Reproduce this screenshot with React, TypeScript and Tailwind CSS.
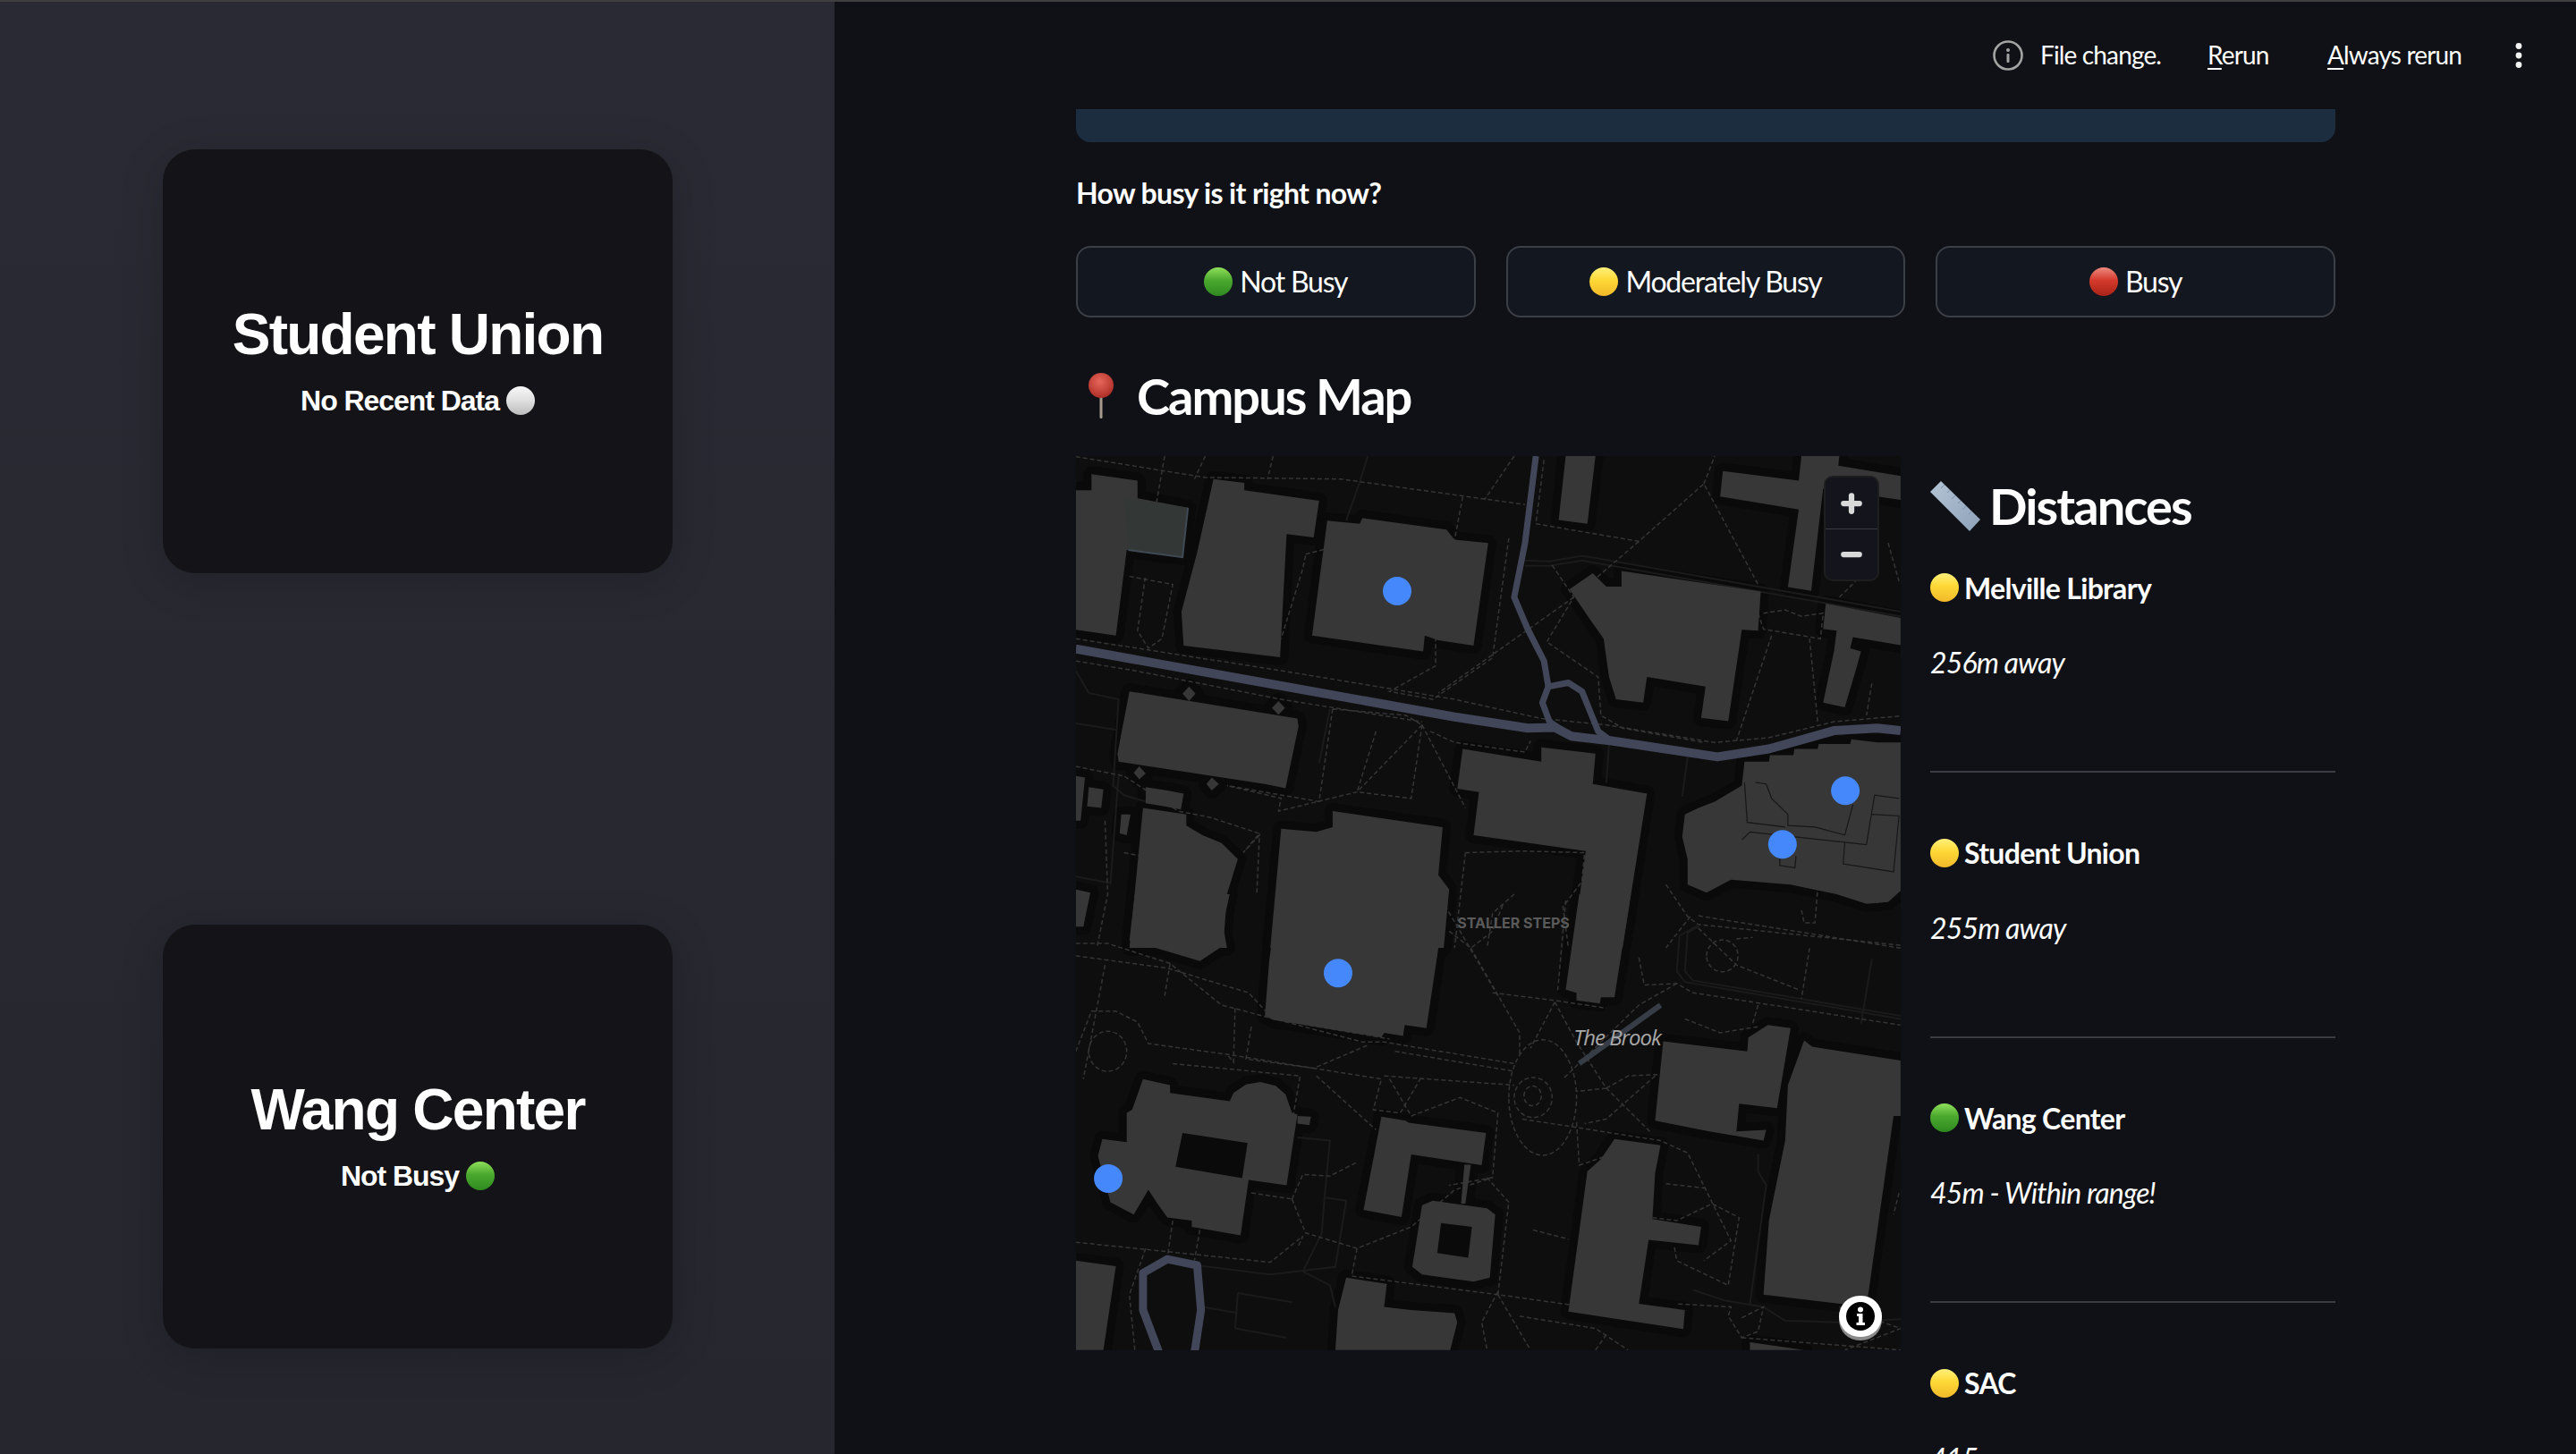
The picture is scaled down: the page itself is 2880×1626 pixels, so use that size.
import React from "react";
import { Plus, Minus } from "lucide-react";

const SANS = "font-['Lato','Noto_Sans',sans-serif]";

type DotKind = "green" | "yellow" | "red" | "white";
const DOTS: Record<DotKind, [string, string, string]> = {
  green: ["#8fe05a", "#4ba82e", "#2f8a1f"],
  yellow: ["#fff07a", "#fdd835", "#f2b92b"],
  red: ["#f08a80", "#d43a2c", "#a92318"],
  white: ["#f7f7f7", "#e2e2e2", "#bdbdbd"],
};

function Dot({ kind, className = "" }: { kind: DotKind; className?: string }) {
  const [a, b, c] = DOTS[kind];
  const id = `dot-${kind}`;
  return (
    <svg viewBox="0 0 32 32" className={`w-8 h-8 shrink-0 ${className}`}>
      <defs>
        <linearGradient id={id} x1="0" y1="0" x2="0" y2="1">
          <stop offset="0" stopColor={a} />
          <stop offset="0.45" stopColor={b} />
          <stop offset="1" stopColor={c} />
        </linearGradient>
      </defs>
      <circle cx="16" cy="16" r="16" fill={`url(#${id})`} />
    </svg>
  );
}

function Card({ title, status, kind }: { title: string; status: string; kind: DotKind }) {
  return (
    <div className="w-[570px] h-[474px] rounded-[36px] bg-[#131318] shadow-[0_8px_50px_rgba(0,0,0,0.16)] flex flex-col items-center justify-center gap-6 text-white font-['Liberation_Sans',sans-serif] font-bold">
      <div className="text-[64px] leading-[64px] tracking-[-1.75px]">{title}</div>
      <div className="text-[32px] leading-9 flex items-center gap-2">
        <span className="tracking-[-1.05px]">{status}</span>
        <Dot kind={kind} />
      </div>
    </div>
  );
}

function StatusButton({ label, kind }: { label: string; kind: DotKind }) {
  return (
    <div className="flex-1 h-20 rounded-2xl border-2 border-[#3d3f47] bg-[#131720] flex items-center justify-center gap-2 text-[32px] text-white">
      <Dot kind={kind} />
      <span className="tracking-[-1.2px]">{label}</span>
    </div>
  );
}

function Pin() {
  return (
    <svg viewBox="0 0 28 52" className="w-7 h-[52px] shrink-0">
      <defs>
        <radialGradient id="pin-head" cx="0.45" cy="0.35" r="0.7">
          <stop offset="0" stopColor="#e8675c" />
          <stop offset="1" stopColor="#a92a22" />
        </radialGradient>
      </defs>
      <rect x="12.5" y="22" width="3" height="29" rx="1.2" fill="#a59a8c" />
      <circle cx="14" cy="14" r="14" fill="url(#pin-head)" />
    </svg>
  );
}

function Ruler() {
  return (
    <svg viewBox="0 0 56 56" className="w-14 h-14 shrink-0">
      <defs>
        <linearGradient id="ruler-g" x1="0" y1="0" x2="1" y2="1">
          <stop offset="0" stopColor="#b4c4d6" />
          <stop offset="1" stopColor="#8fa2b8" />
        </linearGradient>
      </defs>
      <polygon points="12,0 56,43 44,56 0,12" fill="url(#ruler-g)" />
      <path d="M16,4 L12,8 M22,10 L19,13 M28,16 L24,20 M34,22 L31,25 M40,28 L36,32 M46,34 L43,37" stroke="#7d90a6" strokeWidth="1" />
    </svg>
  );
}

const Z4_BUILDINGS = [
  "21,135 50,135 50,85 135,105 135,160 228,190 218,345 115,322 95,590 21,572",
  "275,100 332,112 332,135 470,168 460,283 410,272 398,658 220,622 216,515 245,330",
  "485,230 545,240 550,222 705,258 720,290 782,300 755,622 690,605 665,590 662,640 457,590",
  "975,395 1000,437 1028,437 1028,388 1285,452 1280,575 1250,572 1225,858 1175,848 1183,750 1075,720 1068,800 1018,790 1005,720 995,600 970,540 932,445",
  "925,28 980,28 965,240 912,228",
  "1215,75 1355,105 1360,28 1430,28 1428,58 1543,90 1543,165 1400,130 1378,450 1335,438 1355,195 1210,155",
  "1405,490 1543,535 1543,620 1455,595 1450,630 1470,640 1460,700 1440,815 1400,800 1420,640 1425,575 1400,570",
  "120,765 430,850 432,875 408,1068 370,1055 100,985 98,960",
  "230,750 242,772 230,795 218,772",
  "395,795 407,817 395,838 383,817",
  "138,1000 150,1022 138,1040 128,1020",
  "272,1035 285,1055 272,1075 262,1055",
  "145,1130 225,1150 225,1185 255,1215 290,1240 320,1290 300,1400 295,1520 300,1568 120,1568",
  "400,1195 465,1205 495,1190 495,1140 698,1190 690,1340 710,1385 700,1568 380,1568",
  "735,945 880,985 880,940 980,960 975,1055 1075,1085 1030,1568 938,1568 962,1265 858,1240 755,1215 765,1080 725,1070",
  "1255,985 1300,985 1302,965 1345,965 1347,945 1390,945 1392,930 1450,930 1452,915 1500,925 1543,925 1543,1390 1520,1425 1480,1430 1425,1400 1340,1370 1230,1355 1185,1395 1150,1370 1150,1290 1140,1220 1145,1150 1170,1130 1200,1110 1250,1060",
  "45,1065 72,1072 68,1130 42,1125",
  "105,1150 122,1150 115,1215 102,1210",
  "150,1065 190,1075 220,1085 215,1135 185,1125 150,1115",
  "21,1030 38,1035 30,1170 21,1170",
  "21,1385 48,1395 35,1500 21,1500",
];

const Z5_BUILDINGS = [
  "130,0 305,0 290,120 295,165 250,217 150,165 120,150",
  "395,0 705,0 668,435 628,425 625,460 590,450 585,465 385,408 370,395 378,215",
  "950,0 1045,0 1015,335 990,335 988,355 945,345 945,320 925,310",
  "145,600 195,620 195,645 305,672 312,645 335,618 362,610 390,622 408,650 420,710 430,715 410,945 340,928 325,1108 235,1080 235,1060 190,1050 170,1000 155,960 128,1040 85,1000 62,850 70,795 115,805 115,710 125,700",
  "430,720 455,722 452,750 430,745",
  "585,722 630,735 635,742 778,775 770,880 640,845 622,1048 552,1025",
  "680,995 780,1020 795,1040 785,1245 755,1258 660,1235 642,1210 660,1010",
  "738,878 750,878 740,1005 732,1005",
  "520,1245 595,1265 590,1340 640,1350 720,1360 725,1390 712,1480 500,1480 505,1350",
  "1015,795 1100,815 1090,905 1085,1055 1175,1080 1170,1140 1078,1122 1060,1330 1145,1350 1142,1412 930,1355 965,900 990,860",
  "1105,478 1260,510 1262,465 1298,425 1340,435 1315,695 1245,680 1240,770 1295,765 1290,800 1190,770 1090,735",
  "1365,475 1380,495 1543,540 1543,720 1530,720 1480,1340 1290,1300 1300,1060 1330,800 1335,620",
  "21,1190 95,1208 72,1480 21,1480",
  "1265,1455 1365,1480 1265,1480",
  "21,0 45,0 35,105 21,105",
  "1470,0 1535,0 1500,30",
];

const Z5_HOLES = [
  "218,775 338,808 328,922 205,885",
  "695,1068 752,1080 745,1180 688,1165",
];

const Z4_DASHED = [
  "M21,600 L400,700 L720,790 L880,850 L1000,870 L1200,925 L1300,910 L1420,860 L1543,842",
  "M21,670 L130,700 L400,790 L660,860",
  "M21,30 L260,95 L510,100 L850,180",
  "M185,28 L160,270 M260,28 L240,100",
  "M385,28 L375,100",
  "M735,155 L720,290 M830,28 L775,165",
  "M820,285 L790,660 L680,790 L600,765 L685,685 L685,600",
  "M885,40 L870,240 L1060,295 L1180,115 L1280,430",
  "M1180,115 L1200,28 M1060,295 L940,470 L690,770",
  "M900,370 L940,470 L890,610 L985,720 L990,840 L1030,880 L1180,925",
  "M120,405 L200,430 L180,600 L155,630 L135,575 L150,400",
  "M445,340 L440,380 L400,600 M445,335 L480,320",
  "M660,870 L540,1080 L395,1140 L400,1100 L300,1060",
  "M660,870 L740,1130 M660,870 L640,1100 L540,1080 M575,890 L540,1080",
  "M675,890 L720,925 L850,955 L860,920",
  "M495,820 L630,840 L660,870 M495,820 L470,1110 L300,1060",
  "M740,1270 L845,1265 L960,1270 L955,1360 L920,1440 L930,1568",
  "M740,1270 L720,1568 M830,1400 L790,1460 L780,1568",
  "M1280,520 L1290,570 L1395,600 L1400,520 L1360,530 L1330,510 L1290,520",
  "M1305,590 L1240,920 M1375,600 L1390,860 M1490,740 L1480,840 M1430,470 L1460,420 M1520,300 L1540,420",
  "M1110,1370 L1150,1470 L1170,1495 L1543,1560",
  "M1360,1450 L1365,1490 L1385,1490 L1390,1380 M1155,1470 L1110,1568",
  "M110,1270 L140,1280 M21,1000 L110,1030 L210,1140 L270,1160 L360,1210 L330,1270 L360,1215 L355,1400",
  "M75,1170 L80,1400 L60,1568",
];

const Z5_DASHED = [
  "M21,160 L80,160 L195,225 L290,360 L550,480 L590,480 L830,550",
  "M21,200 L190,240 L340,320 L385,405 L600,470",
  "M21,510 L50,380 L95,380 L135,415 L155,485 L300,520 L460,565 L560,490",
  "M45,510 A35,65 0 1 1 115,510 A35,65 0 1 1 45,510",
  "M75,230 L35,600 M195,225 L185,330 M315,370 L312,545 L300,520",
  "M345,430 L335,535 L460,565 L585,600 L570,700 L620,710 L660,590",
  "M200,550 L435,590 L420,740 M465,590 L575,765 M590,590 L830,620",
  "M610,510 L830,575 M600,600 L640,720 L730,660 L800,710 L790,920 L710,945",
  "M830,660 A35,65 0 1 1 900,660 A35,65 0 1 1 830,660",
  "M848,655 A15,30 0 1 1 880,655 A15,30 0 1 1 848,655",
  "M820,660 A50,150 0 1 1 945,660 A50,150 0 1 1 820,660",
  "M945,740 L950,880 L1000,850 M845,730 L1100,800 L1150,840 L1230,1125 L1180,1190",
  "M750,175 L840,450 L840,520 M905,350 L860,500 M905,350 L945,480 L1000,630 L1080,770",
  "M1000,630 L1040,590 L1100,585 M1000,630 L945,640 M1090,590 L1000,730 L960,745",
  "M710,120 L750,175 L790,120 L810,30 M790,320 L905,345 L1000,370",
  "M1060,205 L1070,295 L1130,290 L1160,320 L1543,425",
  "M1130,290 L1060,360 L920,600 M1185,200 A28,50 0 1 1 1243,200 A28,50 0 1 1 1185,200",
  "M1170,110 L1240,230 L1355,310 M1240,145 L1270,140 M1170,70 L1543,175 M1145,405 L1210,450 L1280,430",
  "M1375,175 L1360,340 M1280,360 L1270,420 M800,330 L700,30 M925,20 L910,320",
  "M420,990 L440,910 L490,915 L540,870 M420,990 L445,1100 L540,1150 L640,1080 L720,960 L790,920",
  "M800,1300 L820,1000 L780,920 M540,1150 L530,1240 L800,1300 L1000,1350",
  "M800,1290 L770,1390 L780,1480 M800,1300 L860,1480 M840,1370 L980,1410 L1040,1480",
  "M345,970 L420,990 M865,1090 L930,1120 M21,1130 L380,1195 L440,1110 L430,1150",
  "M200,1060 L190,1180 M150,1150 L120,1300 L130,1480 M250,1090 L240,1190",
  "M1110,940 L1185,955 M1085,1050 L1130,1060 L1195,1005 L1245,1050 L1225,1270 L1130,1190 L1125,1140",
  "M1250,1375 L1290,1340 L1280,1420 L1250,1440 L1225,1370 L1230,1340 L1130,1330 M1250,1440 L1543,1480",
  "M1540,970 L1530,1040 M1430,1340 L1543,1410 L1440,1480 M1000,1430 L980,1480",
];

const Z4_DARK = [
  "M850,355 L895,358 L955,340 L1543,515",
  "M850,372 L895,372 L955,355 L1543,530",
  "M21,700 L45,770 L100,790 L90,1060 L110,1090 L150,1110",
  "M560,28 L545,110 L520,230",
  "M21,865 L95,885",
  "M490,820 L470,990",
  "M1005,930 L1000,1050",
  "M1150,970 L1140,1095",
  "M21,1345 L85,1365 L100,1030",
];

const Z5_DARK = [
  "M1170,100 L1135,135 L1130,250 L1145,285 L1543,405",
  "M1170,105 L1150,125 L1145,250 L1160,280 L1543,395",
  "M1280,845 L1280,900 L1295,945 L1265,1330",
  "M1490,210 L1470,420",
  "M245,1205 L380,1235 L500,1210 L520,995 L480,985 L490,800 L430,790",
  "M440,1225 L490,1270 L500,1340",
  "M320,1295 L420,1325 M315,1410 L410,1440 M320,1295 L315,1410",
  "M1160,1285 L1220,1320 L1290,1340 L1330,1385 L1430,1390 L1543,1380",
  "M440,1225 L475,1100 L480,985",
  "M255,1340 L320,1360",
];

function z4(x: number, y: number) {
  return [x * 0.6059 - 13, y * 0.3571 - 10];
}
function z5(x: number, y: number) {
  return [x * 0.6059 - 13, 490 + y * 0.3444];
}

const DOTS_MAP = [z4(614, 451), z4(1441, 1076), z4(1325, 1244), z5(505, 256), z5(81, 923)];

function Shadows({ buildings, transform }: { buildings: string[]; transform: string }) {
  return (
    <g transform={transform}>
      {buildings.map((p, i) => (
        <polygon key={i} points={p} fill="#0a0a0a" stroke="#0a0a0a" strokeWidth="18" strokeLinejoin="round" vectorEffect="non-scaling-stroke" />
      ))}
    </g>
  );
}

function Lines({ dashed, dark, transform }: { dashed: string[]; dark: string[]; transform: string }) {
  return (
    <g transform={transform}>
      {dark.map((d, i) => (
        <path key={i} d={d} fill="none" stroke="#1b1b1b" strokeWidth="2" vectorEffect="non-scaling-stroke" />
      ))}
      {dashed.map((d, i) => (
        <path key={i} d={d} fill="none" stroke="#353535" strokeWidth="1.5" strokeDasharray="5 3" vectorEffect="non-scaling-stroke" />
      ))}
    </g>
  );
}

function Buildings({ buildings, holes = [], transform }: { buildings: string[]; holes?: string[]; transform: string }) {
  return (
    <g transform={transform}>
      {buildings.map((p, i) => (
        <polygon key={i} points={p} fill="#373737" />
      ))}
      {holes.map((p, i) => (
        <polygon key={i} points={p} fill="#0a0a0a" />
      ))}
    </g>
  );
}

function CampusMap() {
  const T4 = "translate(-13 -10) scale(0.6059 0.3571)";
  const T5 = "translate(-13 490) scale(0.6059 0.3444)";
  return (
    <div className="relative w-[922px] h-[1000px] shrink-0 overflow-hidden bg-[#0e0e0e]">
      <svg viewBox="0 0 922 1000" className="block w-full h-full">
        <Shadows buildings={Z4_BUILDINGS} transform={T4} />
        <Shadows buildings={Z5_BUILDINGS} transform={T5} />
        <Lines dashed={Z4_DASHED} dark={Z4_DARK} transform={T4} />
        <Lines dashed={Z5_DASHED} dark={Z5_DARK} transform={T5} />
        <Buildings buildings={Z4_BUILDINGS} transform={T4} />
        <Buildings buildings={Z5_BUILDINGS} holes={Z5_HOLES} transform={T5} />
        <g transform={T4}>
          <polygon points="110,160 228,190 218,345 118,322" fill="#333836" />
          <path d="M228,190 L218,345 L118,322" fill="none" stroke="#3f4a55" strokeWidth="2" vectorEffect="non-scaling-stroke" />
          <path d="M1275,1050 L1295,1055 L1305,1100 L1335,1150 L1335,1185 L1385,1190 L1440,1215 L1455,1120 M1255,1050 L1260,1175 L1330,1190 M1250,1230 L1265,1205 L1480,1245 L1495,1090 L1540,1100 M1440,1240 L1437,1305 L1530,1330 L1540,1155 L1490,1150 M1320,1280 L1320,1310 L1348,1318 L1350,1280" fill="none" stroke="#171717" strokeWidth="1.2" vectorEffect="non-scaling-stroke" />
          <path vectorEffect="non-scaling-stroke" d="M21,632 L720,845 L855,880 L905,878 L935,905 L1010,920 L1205,970 L1300,945 L1420,888 L1500,880 L1543,888" fill="none" stroke="#414759" strokeWidth="10" strokeLinejoin="round" />
          <g fill="none" stroke="#414759" strokeWidth="7" strokeLinejoin="round">
            <path vectorEffect="non-scaling-stroke" d="M870,28 L850,300 L830,470 L855,570 L885,670 L893,750 L930,738 L955,765 L985,890 L1005,915" />
            <path vectorEffect="non-scaling-stroke" d="M893,750 L882,800 L895,860 L935,905" />
          </g>
        </g>
        <g transform={T5}>
          <path vectorEffect="non-scaling-stroke" d="M175,1490 L145,1350 L145,1230 L190,1185 L245,1205 L252,1350 L240,1490" fill="none" stroke="#414759" strokeWidth="9" strokeLinejoin="round" />
          <path vectorEffect="non-scaling-stroke" d="M950,550 L1100,360" fill="none" stroke="#373d47" strokeWidth="6" />
        </g>
        {DOTS_MAP.map(([cx, cy], i) => (
          <circle key={i} cx={cx} cy={cy} r="16" fill="#4488fb" />
        ))}
        <text x="489" y="528" textAnchor="middle" fontSize="16" fontWeight="700" fill="#5a5a5a" fontFamily="Inter, sans-serif">STALLER STEPS</text>
        <text x="605" y="659" textAnchor="middle" fontSize="24" fontStyle="italic" fill="#a8a8a8" fontFamily="'Open Sans', sans-serif" letterSpacing="-1">The Brook</text>
      </svg>
      <div className="absolute left-[838px] top-6 w-[58px] h-[114px] rounded-lg bg-[#14151c] ring-2 ring-[#1e1e1e] flex flex-col items-center text-[#d9d9d9]">
        <div className="h-[58px] w-full flex items-center justify-center border-b border-[#3a3b40]">
          <Plus size={30} strokeWidth={5} />
        </div>
        <div className="flex-1 w-full flex items-center justify-center">
          <Minus size={30} strokeWidth={5} />
        </div>
      </div>
      <div className="absolute left-[853px] top-[939px] w-[48px] h-[46px] rounded-full bg-white shadow-[0_4px_0_#8a8a8a] flex items-center justify-center">
        <svg viewBox="0 0 32 32" className="w-8 h-8">
          <circle cx="16" cy="16" r="16" fill="#000" />
          <circle cx="16" cy="8.5" r="3" fill="#fff" />
          <path d="M12 13 H18.5 V23 H21 V26 H11.5 V23 H14 V16 H12 Z" fill="#fff" />
        </svg>
      </div>
    </div>
  );
}

function Distance({ name, text, kind }: { name: string; text: string; kind: DotKind }) {
  return (
    <div className="h-[296.5px] shrink-0">
      <div className="h-10 flex items-center gap-[6px] text-[32px] font-bold text-white tracking-[-0.7px]">
        <Dot kind={kind} />
        <span className="mt-[1px]">{name}</span>
      </div>
      <div className="mt-11 h-10 flex items-center text-[32px] italic text-white tracking-[-0.85px]">{text}</div>
      <div className="mt-[101px] h-[2px] bg-[#3c3d44]" />
    </div>
  );
}

function Header() {
  return (
    <div className="h-[120px] shrink-0 flex items-center pl-[1295px] text-[28px] text-white tracking-[-0.85px]">
      <svg viewBox="0 0 34 34" className="w-[34px] h-[34px] shrink-0">
        <circle cx="17" cy="17" r="15.5" fill="none" stroke="#a3a3a3" strokeWidth="2.6" />
        <circle cx="17" cy="11" r="2" fill="#a3a3a3" />
        <rect x="15.5" y="15" width="3" height="10" rx="1" fill="#a3a3a3" />
      </svg>
      <span className="ml-[19px] w-[187px] shrink-0 -mt-[3px]">File change.</span>
      <span className="w-[134px] shrink-0 -mt-[3px]"><span className="underline underline-offset-4">R</span>erun</span>
      <span className="w-[209px] shrink-0 -mt-[3px]"><span className="underline underline-offset-4">A</span>lways rerun</span>
      <svg viewBox="0 0 10 28" className="w-[10px] h-7 shrink-0">
        <circle cx="5" cy="3.5" r="3.4" fill="#f2f2f2" />
        <circle cx="5" cy="14" r="3.4" fill="#f2f2f2" />
        <circle cx="5" cy="24.5" r="3.4" fill="#f2f2f2" />
      </svg>
    </div>
  );
}

export default function App() {
  return (
    <div className="w-[2880px] h-[1626px] overflow-hidden flex flex-col bg-[#0f1116]">
      <div className="h-[2px] shrink-0 bg-[#3f3f3f]" />
      <div className="flex-1 min-h-0 flex">
        <aside className="w-[933px] shrink-0 bg-[linear-gradient(#292a33,#25262e)] pl-[182px] pt-[165px] flex flex-col gap-[393px]">
          <Card title="Student Union" status="No Recent Data" kind="white" />
          <Card title="Wang Center" status="Not Busy" kind="green" />
        </aside>
        <main className={`flex-1 min-w-0 flex flex-col overflow-hidden ${SANS}`}>
          <Header />
          <div className="pl-[270px] w-[1678px]">
            <div className="h-[37px] rounded-b-2xl bg-[#1d2d40]" />
            <div className="mt-[37px] h-10 flex items-center text-[32px] font-bold text-white tracking-[-0.65px]">How busy is it right now?</div>
            <div className="mt-[39px] flex gap-[34px]">
              <StatusButton label="Not Busy" kind="green" />
              <StatusButton label="Moderately Busy" kind="yellow" />
              <StatusButton label="Busy" kind="red" />
            </div>
            <div className="mt-[53px] h-[70px] flex items-center gap-[26px] pl-[14px] text-[56px] font-bold text-white tracking-[-2px]">
              <Pin />
              <span>Campus Map</span>
            </div>
            <div className="mt-[32px] flex gap-[33px]">
              <CampusMap />
              <div className="flex-1 min-w-0 flex flex-col">
                <div className="mt-[21px] mb-[1px] h-[70px] flex items-center gap-[13px] text-[56px] font-bold text-white tracking-[-1.9px]">
                  <Ruler />
                  <span className="-ml-[3px]">Distances</span>
                </div>
                <div className="mt-[35px] flex flex-col">
                  <Distance name="Melville Library" text="256m away" kind="yellow" />
                  <Distance name="Student Union" text="255m away" kind="yellow" />
                  <Distance name="Wang Center" text="45m - Within range!" kind="green" />
                  <Distance name="SAC" text="415m away" kind="yellow" />
                </div>
              </div>
            </div>
          </div>
        </main>
      </div>
    </div>
  );
}
